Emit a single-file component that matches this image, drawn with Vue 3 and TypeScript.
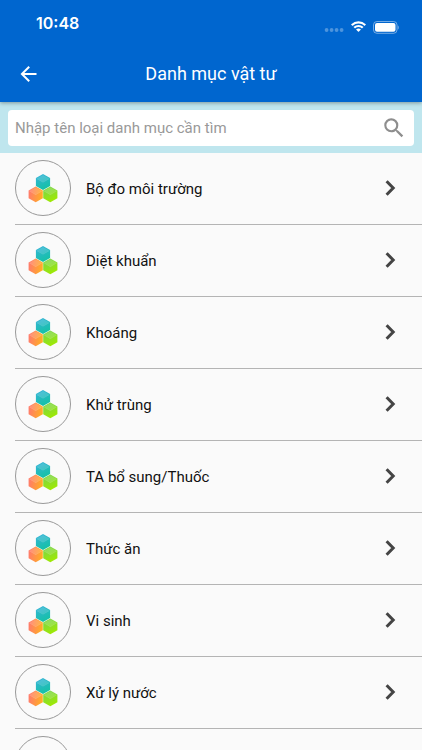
<script setup lang="ts">
import { computed, ref } from 'vue'

interface Category {
  id: number
  name: string
}

const categories: Category[] = [
  { id: 1, name: 'Bộ đo môi trường' },
  { id: 2, name: 'Diệt khuẩn' },
  { id: 3, name: 'Khoáng' },
  { id: 4, name: 'Khử trùng' },
  { id: 5, name: 'TA bổ sung/Thuốc' },
  { id: 6, name: 'Thức ăn' },
  { id: 7, name: 'Vi sinh' },
  { id: 8, name: 'Xử lý nước' },
  { id: 9, name: '' },
]

const query = ref('')

const visible = computed(() => {
  const q = query.value.trim().toLowerCase()
  return q ? categories.filter((c) => c.name.toLowerCase().includes(q)) : categories
})
</script>

<template>
  <div class="screen">
    <header class="header">
      <div class="status">
        <span class="time">10:48</span>
        <div class="indicators">
          <svg class="dots" width="20" height="6" viewBox="0 0 20 6" aria-hidden="true">
            <circle cx="2.6" cy="2" r="1.9" />
            <circle cx="7.6" cy="2" r="1.9" />
            <circle cx="12.6" cy="2" r="1.9" />
            <circle cx="17.6" cy="2" r="1.9" />
          </svg>
          <svg width="17" height="12" viewBox="0 0 16 12" aria-hidden="true">
            <path d="M8 2.5c2.2 0 4.2.85 5.75 2.3.12.1.3.1.42 0l1.1-1.13a.3.3 0 0 0 0-.44 10.6 10.6 0 0 0-14.54 0 .3.3 0 0 0 0 .44l1.1 1.13c.12.1.3.1.42 0A8.4 8.4 0 0 1 8 2.5z" />
            <path d="M8 6.1c1.2 0 2.35.45 3.25 1.26.12.11.3.11.42 0l1.1-1.13a.3.3 0 0 0 0-.45 7 7 0 0 0-9.54 0 .3.3 0 0 0 0 .45l1.1 1.13c.12.11.3.11.42 0A4.85 4.85 0 0 1 8 6.1z" />
            <path d="M10.2 8.8a.3.3 0 0 0 0-.46 3.4 3.4 0 0 0-4.4 0 .3.3 0 0 0 0 .46l1.98 1.95c.12.12.32.12.44 0z" />
          </svg>
          <svg width="26" height="13" viewBox="0 0 26 13" aria-hidden="true">
            <rect class="case" x="0.5" y="0.5" width="23.5" height="11.8" rx="3.4" />
            <rect x="2" y="2" width="20.5" height="8.8" rx="2" />
            <path class="tip" d="M24.8 4.4v4c.7-.35 1-1.1 1-2s-.3-1.65-1-2z" />
          </svg>
        </div>
      </div>
      <div class="bar">
        <button class="back" type="button" aria-label="Quay lại">
          <svg width="24" height="24" viewBox="0 0 24 24" aria-hidden="true">
            <path d="M20.5 11H8.33l5.59-5.59L12.5 4l-8 8 8 8 1.41-1.41L8.33 13H20.5z" />
          </svg>
        </button>
        <h1 class="title">Danh mục vật tư</h1>
      </div>
    </header>

    <form class="search" role="search" @submit.prevent>
      <div class="field">
        <input
          v-model="query"
          class="input"
          type="text"
          aria-label="Nhập tên loại danh mục cần tìm"
          placeholder="Nhập tên loại danh mục cần tìm"
        />
        <button class="find" type="submit" aria-label="Tìm kiếm">
          <svg width="26" height="26" viewBox="0 0 24 24" aria-hidden="true">
            <path d="M15.5 14h-.79l-.28-.27A6.47 6.47 0 0 0 16 9.5 6.5 6.5 0 1 0 9.5 16c1.61 0 3.09-.59 4.23-1.57l.27.28v.79l5 4.99L20.49 19zm-6 0C7.01 14 5 11.99 5 9.5S7.01 5 9.5 5 14 7.01 14 9.5 11.99 14 9.5 14z" />
          </svg>
        </button>
      </div>
    </form>

    <svg class="defs" width="0" height="0" aria-hidden="true">
      <defs>
        <linearGradient id="teal" x1="0.2" y1="0" x2="0.6" y2="1">
          <stop offset="0" stop-color="#35b4d8" />
          <stop offset="1" stop-color="#14c2a4" />
        </linearGradient>
        <linearGradient id="orange" x1="0" y1="0.4" x2="1" y2="0.6">
          <stop offset="0" stop-color="#ff7a6c" />
          <stop offset="1" stop-color="#ffb020" />
        </linearGradient>
        <linearGradient id="green" x1="0.2" y1="0" x2="0.6" y2="1">
          <stop offset="0" stop-color="#78d350" />
          <stop offset="1" stop-color="#a0ea00" />
        </linearGradient>
        <path id="hexagon" d="M7.3 0.2L14.4 4.2v7.8L7.3 16 0.2 12V4.2z" />
        <g id="facets" fill="#fff">
          <path d="M7.3 1L13.5 4.5 7.3 8 1.1 4.5z" fill-opacity="0.14" />
          <path d="M7.3 8l6.2-3.5.5.3L7.3 8.7 0.6 4.8l.5-.3z" fill-opacity="0.25" />
        </g>
      </defs>
    </svg>

    <ul class="list">
      <li v-for="item in visible" :key="item.id" class="item">
        <a class="row" href="#" :aria-label="item.name || undefined">
          <span class="avatar">
            <svg width="30" height="30" viewBox="0 0 30 30" aria-hidden="true">
              <g transform="translate(7.7 0.9)">
                <use href="#hexagon" fill="url(#teal)" />
                <use href="#facets" />
              </g>
              <g transform="translate(0.4 13.2)">
                <use href="#hexagon" fill="url(#orange)" />
                <use href="#facets" />
              </g>
              <g transform="translate(15 13.2)">
                <use href="#hexagon" fill="url(#green)" />
                <use href="#facets" />
              </g>
            </svg>
          </span>
          <span class="name">{{ item.name }}</span>
          <svg class="chevron" width="12" height="18" viewBox="0 0 12 18" aria-hidden="true">
            <path d="M2.6 2.2L9.2 9l-6.6 6.8" />
          </svg>
        </a>
      </li>
    </ul>
  </div>
</template>

<style>
body {
  background: #fafafa;
}
</style>

<style scoped>
.screen {
  display: flex;
  flex-direction: column;
  height: 100vh;
  overflow: hidden;
  background: #fafafa;
  color: #111;
  font-family: Roboto, 'Noto Sans', sans-serif;
}

.header {
  position: relative;
  flex: none;
  background: #0066cf;
  color: #fff;
  box-shadow: 0 1px 4px rgba(0, 0, 0, 0.35);
}

.status {
  display: flex;
  align-items: center;
  justify-content: space-between;
  height: 46px;
  padding: 0 23px 0 36px;
}

.time {
  font: 600 16px/20px Inter, sans-serif;
}

.indicators {
  display: flex;
  align-items: center;
  gap: 6px;
  padding-top: 8px;
  fill: #fff;
}

.dots {
  align-self: flex-end;
  opacity: 0.3;
}

.case {
  fill: none;
  stroke: #fff;
  stroke-opacity: 0.45;
}

.tip {
  fill-opacity: 0.45;
}

.bar {
  display: grid;
  grid-template-columns: 56px 1fr 56px;
  align-items: center;
  height: 56px;
}

.back,
.find {
  display: flex;
  align-items: center;
  justify-content: center;
  padding: 0;
  border: 0;
  background: none;
  cursor: pointer;
}

.back {
  height: 56px;
  fill: #fff;
}

.title {
  margin: 0;
  font-size: 18px;
  font-weight: 400;
  line-height: 24px;
  text-align: center;
}

.search {
  flex: none;
  padding: 8px 8px 7px;
  background: #bfe6ee;
}

.field {
  display: flex;
  align-items: center;
  height: 36px;
  padding: 0 7px;
  border-radius: 4px;
  background: #fff;
}

.input {
  flex: 1;
  min-width: 0;
  padding: 0;
  border: 0;
  outline: 0;
  background: none;
  color: #111;
  font: 400 15px/20px Roboto, 'Noto Sans', sans-serif;
}

.input::placeholder {
  color: #999;
  opacity: 1;
}

.find {
  fill: #8e8e8e;
}

.defs {
  position: absolute;
}

.list {
  flex: 1;
  min-height: 0;
  margin: 0;
  padding: 0 0 0 15px;
  overflow-y: auto;
  scrollbar-width: none;
  list-style: none;
}

.item {
  border-bottom: 1px solid #b4b4b4;
}

.row {
  display: flex;
  align-items: center;
  gap: 15px;
  padding: 7px 26px 8px 0;
  color: inherit;
  text-decoration: none;
}

.avatar {
  display: flex;
  align-items: center;
  justify-content: center;
  box-sizing: border-box;
  width: 56px;
  height: 56px;
  border: 1px solid #999;
  border-radius: 50%;
}

.name {
  flex: 1;
  padding-top: 2px;
  font-size: 15px;
  line-height: 20px;
}

.chevron {
  fill: none;
  stroke: #444;
  stroke-width: 3;
}
</style>
